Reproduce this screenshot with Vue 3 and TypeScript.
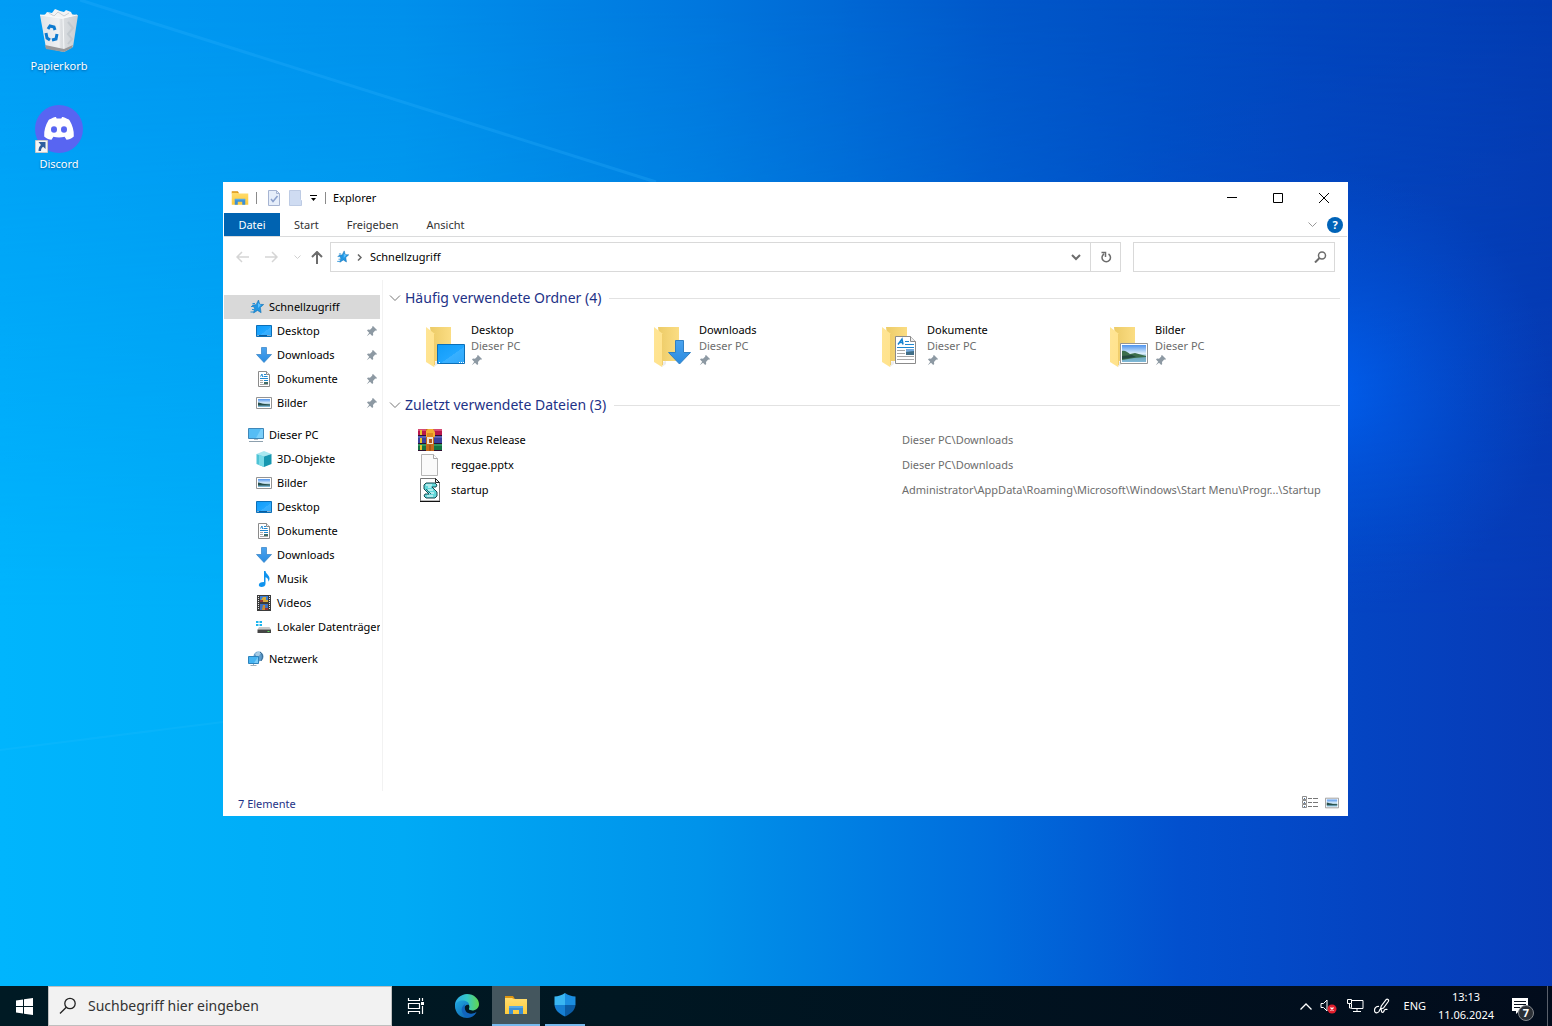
<script setup lang="ts">
import { ref } from 'vue'

interface NavItem { icon: string; label: string; level: number; pinned?: boolean; selected?: boolean }
interface Folder { icon: string; name: string }
interface RecentFile { icon: string; name: string; path: string }

const navGroups: NavItem[][] = [
  [
    { icon: 'star', label: 'Schnellzugriff', level: 0, selected: true },
    { icon: 'desktop', label: 'Desktop', level: 1, pinned: true },
    { icon: 'download', label: 'Downloads', level: 1, pinned: true },
    { icon: 'document', label: 'Dokumente', level: 1, pinned: true },
    { icon: 'picture', label: 'Bilder', level: 1, pinned: true },
  ],
  [
    { icon: 'pc', label: 'Dieser PC', level: 0 },
    { icon: 'cube', label: '3D-Objekte', level: 1 },
    { icon: 'picture', label: 'Bilder', level: 1 },
    { icon: 'desktop', label: 'Desktop', level: 1 },
    { icon: 'document', label: 'Dokumente', level: 1 },
    { icon: 'download', label: 'Downloads', level: 1 },
    { icon: 'music', label: 'Musik', level: 1 },
    { icon: 'video', label: 'Videos', level: 1 },
    { icon: 'drive', label: 'Lokaler Datenträger', level: 1 },
  ],
  [{ icon: 'network', label: 'Netzwerk', level: 0 }],
]

const folders: Folder[] = [
  { icon: 'folder-desktop', name: 'Desktop' },
  { icon: 'folder-download', name: 'Downloads' },
  { icon: 'folder-document', name: 'Dokumente' },
  { icon: 'folder-picture', name: 'Bilder' },
]

const files: RecentFile[] = [
  { icon: 'winrar', name: 'Nexus Release', path: 'Dieser PC\\Downloads' },
  { icon: 'blank-file', name: 'reggae.pptx', path: 'Dieser PC\\Downloads' },
  { icon: 'script-file', name: 'startup', path: 'Administrator\\AppData\\Roaming\\Microsoft\\Windows\\Start Menu\\Progr...\\Startup' },
]

const tabs = ['Start', 'Freigeben', 'Ansicht']
const windowSearch = ref('')
const taskbarSearch = ref('')
</script>

<template>
  <svg class="sprite" aria-hidden="true">
    <defs>
      <linearGradient id="g-blue" x1="0" y1="0" x2="1" y2="1">
        <stop offset="0" stop-color="#109cf8" /><stop offset=".55" stop-color="#20a6ff" /><stop offset=".56" stop-color="#38b0ff" /><stop offset="1" stop-color="#30a8fb" />
      </linearGradient>
      <linearGradient id="g-arrow" x1="0" y1="0" x2="0" y2="1">
        <stop offset="0" stop-color="#4aa3ef" /><stop offset="1" stop-color="#2a8be0" />
      </linearGradient>
      <linearGradient id="g-folder-back" x1="0" y1="0" x2="1" y2="0">
        <stop offset="0" stop-color="#eccb67" /><stop offset="1" stop-color="#fbdd83" />
      </linearGradient>
      <linearGradient id="g-folder-front" x1="0" y1="0" x2="1" y2="1">
        <stop offset="0" stop-color="#ffe596" /><stop offset="1" stop-color="#ffe28a" />
      </linearGradient>
      <linearGradient id="g-photo" x1="0" y1="0" x2="0" y2="1">
        <stop offset="0" stop-color="#4f94ee" /><stop offset=".5" stop-color="#dceefa" /><stop offset=".7" stop-color="#6fa8b8" /><stop offset="1" stop-color="#7fb8d8" />
      </linearGradient>
      <linearGradient id="g-yellow" x1="0" y1="0" x2="0" y2="1">
        <stop offset="0" stop-color="#ffdc6e" /><stop offset="1" stop-color="#ffcb3a" />
      </linearGradient>
      <linearGradient id="g-edge-blue" x1="0" y1="0" x2="1" y2="1">
        <stop offset="0" stop-color="#1fa8e0" /><stop offset="1" stop-color="#0b56a8" />
      </linearGradient>
      <linearGradient id="g-edge-green" x1="0" y1="0" x2="1" y2="0">
        <stop offset="0" stop-color="#2ba9e8" /><stop offset=".5" stop-color="#35c8c8" /><stop offset="1" stop-color="#62d64e" />
      </linearGradient>
      <linearGradient id="g-bin" x1="0" y1="0" x2="1" y2="0">
        <stop offset="0" stop-color="#dfe3e7" /><stop offset=".5" stop-color="#eff1f3" /><stop offset=".55" stop-color="#dcdfe2" /><stop offset="1" stop-color="#c9ced3" />
      </linearGradient>
    </defs>

    <symbol id="i-star" viewBox="0 0 16 16">
      <path d="M10.500 1l1.200 4.300 4 .2-3.400 3 .8 5.200-3.600-2.300-3.900 2.600 1-4.800-2.300-3.100 3.800-.4z" fill="#2196e3" stroke="#1371b4" stroke-width=".6" />
      <path d="M4.500 4.500H7M3 7.500h2M4 10.500h2M2.500 13h3.500" stroke="#2791d8" />
      <path d="M10 4v5l3-3z" fill="#5bc0ff" />
    </symbol>
    <symbol id="i-desktop" viewBox="0 0 16 16">
      <path d="M.5 2.500h15v11H.5z" fill="url(#g-blue)" stroke="#0b6fb8" />
      <path d="M1 12.500h14" stroke="#0b5c9c" /><path d="M1.500 12.500h1m9 0h1m1 0h1" stroke="#fff" />
    </symbol>
    <symbol id="i-download" viewBox="0 0 16 16">
      <path d="M5.500.5h5v7h5L8 15.500.5 7.500h5z" fill="url(#g-arrow)" stroke="#3080c4" stroke-width=".7" />
    </symbol>
    <symbol id="i-document" viewBox="0 0 16 16">
      <path d="M2.500.5h8l3 3v12h-11z" fill="#fff" stroke="#8b8b8b" /><path d="M10.500.5v3h3" fill="#eee" stroke="#8b8b8b" />
      <path d="M4.500 5.500L6 3l.5 3M8 3.500h2M7.500 5.500h4M4 7.500h8M8 9.500h4" stroke="#2088d0" fill="none" />
      <path d="M4 9.500h3M4 11.500h3M4 13.500h8" stroke="#a8a8a8" /><path d="M8 11h4v2H8z" fill="#416e66" />
    </symbol>
    <symbol id="i-picture" viewBox="0 0 16 16">
      <path d="M.5 2.500h15v11H.5z" fill="#fff" stroke="#949494" />
      <path d="M2 4h12v8H2z" fill="url(#g-photo)" /><path d="M2 7.500c2 0 4 1.500 7 1.500l5 .5v1H2z" fill="#294f4b" />
    </symbol>
    <symbol id="i-pc" viewBox="0 0 16 16">
      <path d="M.5 1.500h15v10H.5z" fill="#56bdf5" stroke="#3f87b8" /><path d="M8 11L13 2h2v9z" fill="#7bcffa" />
      <path d="M6 12h4v1H6z" fill="#b7c2ca" /><path d="M1 14.500h14" stroke="#8da0ae" />
    </symbol>
    <symbol id="i-cube" viewBox="0 0 16 16">
      <path d="M8 0l7.500 3L8 5.500.5 3z" fill="#a8e8f0" /><path d="M.5 3L8 5.500V16L.5 13z" fill="#4fc4d6" />
      <path d="M15.500 3L8 5.500V16l7.500-3z" fill="#1697b0" /><path d="M3 3.800l5 1.700V16l-5-2z" fill="#77d9e6" />
    </symbol>
    <symbol id="i-music" viewBox="0 0 16 16">
      <path d="M8 0h1.500c.3 3 4 4 4 7.500 0 1.500-.6 2.500-1.200 3.200.4-2.500-1-4-2.800-4.500v6.500C9.500 15 7.500 16 5.500 16 4 16 2.800 15.300 2.800 14c0-1.700 2-3 5.200-3z" fill="#0f93ee" />
    </symbol>
    <symbol id="i-video" viewBox="0 0 16 16">
      <path d="M1 0h14v16H1z" fill="#3b3b3b" /><path d="M4 1h8v6H4z" fill="#3d7fd0" /><path d="M4 9h8v6H4z" fill="#3d6fc0" />
      <path d="M7 2h3v3h2v2H5V5z" fill="#d7ab3a" /><path d="M7 10h2v3h3v2H6z" fill="#c88a30" /><path d="M4 5h3v2H4zM9 13h3v2H9z" fill="#913638" />
      <path d="M2.500 1v14M13.500 1v14" stroke="#e8e8e8" stroke-dasharray="1 1" />
    </symbol>
    <symbol id="i-drive" viewBox="0 0 16 16">
      <path d="M0 2h2.500v2H0zM3.500 2H6v2H3.500zM0 5h2.500v2H0zM3.500 5H6v2H3.500z" fill="#1bb5ee" />
      <path d="M3 8h10.500l1.500 2.500H1.500z" fill="#c8c8c8" /><path d="M1.500 10.500H15V14H1.500z" fill="#454545" /><path d="M11.500 12.500h2" stroke="#5be05b" />
    </symbol>
    <symbol id="i-network" viewBox="0 0 16 16">
      <circle cx="10.500" cy="5.500" r="5" fill="#5f9ccc" /><path d="M7 3c2-3 5-2 6-1-2 2-1 3-4 4z" fill="#a7cbe3" /><path d="M12 1c3 2 3 6 1 9" fill="none" stroke="#36668c" />
      <path d="M.5 5.500h10v7H.5z" fill="#46b4f2" stroke="#2d83bd" /><path d="M10 6v6H6z" fill="#7accf8" /><path d="M2.500 14.500h6M5.500 13v2" stroke="#9fb0bc" />
    </symbol>
    <symbol id="i-pin" viewBox="0 0 12 12">
      <path d="M7 1l4 4-.8.8-1-.2L7 8l.2 2-1 1L4 8.800.8 11.200l2.400-3.400L1 5.500l1-1 2 .2L6.300 2.500l-.2-.8z" fill="#8d99a3" />
    </symbol>
    <symbol id="i-explorer" viewBox="0 0 24 24">
      <path d="M1 3h8l2 3H1z" fill="#dc9410" /><path d="M1 5h7l2 1h13v15H1z" fill="url(#g-yellow)" />
      <path d="M5 14h14v7h-4v-4h-6v4H5z" fill="#3c8fd6" /><path d="M5 13h14v2H5z" fill="#57a9e5" />
    </symbol>

    <symbol id="folder-base" viewBox="0 0 42 44">
      <path d="M5 2h21v34H9z" fill="url(#g-folder-back)" /><path d="M9 37l4-1v3l-4 3z" fill="#ececec" />
      <path d="M1 2l9 7v28l-1 5-8-5z" fill="url(#g-folder-front)" /><path d="M9.500 9v31" stroke="#f1ce6c" />
    </symbol>
    <symbol id="i-folder-desktop" viewBox="0 0 42 44">
      <use href="#folder-base" width="42" height="44" />
      <path d="M12.500 19.500h27v19h-27z" fill="url(#g-blue)" stroke="#0b6fb8" /><path d="M14 37.500h1m19 0h1m1 0h1m1 0h1" stroke="#fff" />
    </symbol>
    <symbol id="i-folder-download" viewBox="0 0 42 44">
      <use href="#folder-base" width="42" height="44" />
      <path d="M22.500 15.500h8v12h7L26.500 39l-11-11.500h7z" fill="url(#g-arrow)" stroke="#3080c4" />
    </symbol>
    <symbol id="i-folder-document" viewBox="0 0 42 44">
      <use href="#folder-base" width="42" height="44" />
      <path d="M14.500 11.500h15l5 5v22h-20z" fill="#fff" stroke="#8b8b8b" /><path d="M29.500 11.500v5h5" fill="#eee" stroke="#8b8b8b" />
      <path d="M17 19.500l4-5.500 1 5.500M18.500 17.500h3" fill="none" stroke="#1582d0" stroke-width="1.500" />
      <path d="M24 16.500h4M24 19.500h9M16 22.500h17" stroke="#2088d0" />
      <path d="M16 25.500h8M16 28.500h8M16 31.500h17M16 34.500h17" stroke="#a8a8a8" /><path d="M25 24h8v6h-8z" fill="#416e86" /><path d="M25 24h8v2l-8 1z" fill="#75aadc" />
    </symbol>
    <symbol id="i-folder-picture" viewBox="0 0 42 44">
      <use href="#folder-base" width="42" height="44" />
      <path d="M11.500 18.500h27v20h-27z" fill="#fff" stroke="#949494" /><path d="M13 20h24v17H13z" fill="url(#g-photo)" />
      <path d="M13 26c3-1 5 1 8 3l5-1 11 3v1l-12 1-12 2z" fill="#3c6e4c" /><path d="M13 31l10-1 4 2-14 2z" fill="#234a40" />
    </symbol>
    <symbol id="i-winrar" viewBox="0 0 24 24">
      <path d="M0 1h24v7H0z" fill="#b8174b" /><path d="M0 1h24v2H0z" fill="#d64a74" /><path d="M0 8h24v8H0z" fill="#38409e" /><path d="M0 8h24v2H0z" fill="#5a61b8" />
      <path d="M0 16h24v7H0z" fill="#157343" /><path d="M0 16h24v2H0z" fill="#2f965f" /><path d="M0 7.500h24M0 15.500h24M0 22.500h24" stroke="#2c1030" />
      <path d="M2 2h2v5H2zM2 10h2v5H2zM2 17h2v5H2z" fill="#e5c42e" /><path d="M8 1h8v22H8z" fill="#c56a1c" />
      <path d="M8 3l2-2h5l2 3v5H8z" fill="#f3ae32" /><path d="M9 5h6v4H9z" fill="#e08a20" /><path d="M9 9h6v7H9z" fill="#eee3d0" /><path d="M11 11h3v4h-3z" fill="#b55518" /><path d="M12 17v6" stroke="#8b4410" />
    </symbol>
    <symbol id="i-blank-file" viewBox="0 0 24 24">
      <path d="M3.500 1.500h12l4 4v17h-16z" fill="#fafafa" stroke="#b5b5b5" /><path d="M15.500 1.500v4h4" fill="#fff" stroke="#a5a5a5" />
    </symbol>
    <symbol id="i-script-file" viewBox="0 0 24 24">
      <path d="M2.500.5h15l4 4v18.500h-19z" fill="#fff" stroke="#777" /><path d="M2 23.500h20" stroke="#111" /><path d="M17.500.5v4h4z" fill="#eee" stroke="#222" />
      <path d="M8 5h9l2 2-1 2h-4l5 5v4l-2 2H8l-2-2 1-2h4L6 11V7z" fill="#62d8da" stroke="#194b50" />
      <path d="M8 7h6M10 9h3M10 12h5M11 15h5M9 18h6" stroke="#fff" /><path d="M8 11l5 5" stroke="#206e72" />
    </symbol>
  </svg>

  <div class="screen">
    <svg class="wallpaper" viewBox="0 0 1552 1026" preserveAspectRatio="none" aria-hidden="true">
      <defs>
        <linearGradient id="w-top" x1="0" y1="0" x2="1" y2="0">
          <stop offset="0" stop-color="#009df5" /><stop offset=".26" stop-color="#0090ec" /><stop offset=".45" stop-color="#0077de" />
          <stop offset=".64" stop-color="#0058ca" /><stop offset=".84" stop-color="#0246be" /><stop offset="1" stop-color="#033cb2" />
        </linearGradient>
        <linearGradient id="w-bottom" x1="0" y1="0" x2="1" y2="0">
          <stop offset="0" stop-color="#00b5fd" /><stop offset=".26" stop-color="#00aaf5" /><stop offset=".45" stop-color="#0093ea" />
          <stop offset=".64" stop-color="#006cdc" /><stop offset=".76" stop-color="#0250ce" /><stop offset=".88" stop-color="#0444c2" /><stop offset="1" stop-color="#073ab6" />
        </linearGradient>
        <linearGradient id="w-fade" x1="0" y1="0" x2="0" y2="1">
          <stop offset="0" stop-color="#000" /><stop offset=".6" stop-color="#fff" />
        </linearGradient>
        <mask id="w-mask"><rect width="1552" height="1026" fill="url(#w-fade)" /></mask>
        <radialGradient id="w-glow" gradientUnits="userSpaceOnUse" cx="1330" cy="390" r="220">
          <stop offset="0" stop-color="#0068ff" stop-opacity=".7" /><stop offset="1" stop-color="#0058e0" stop-opacity="0" />
        </radialGradient>
      </defs>
      <rect width="1552" height="1026" fill="url(#w-top)" />
      <rect width="1552" height="1026" fill="url(#w-bottom)" mask="url(#w-mask)" />
      <rect width="1552" height="1026" fill="url(#w-glow)" />
      <path d="M80 0L656 182" stroke="#30b4ff" stroke-width="3" opacity=".25" />
      <path d="M0 750L223 722" stroke="#40c8ff" stroke-width="2" opacity=".12" />
    </svg>

    <main class="desktop">
      <div class="shortcuts">
        <button class="shortcut">
          <svg width="48" height="48" viewBox="0 0 48 48" aria-hidden="true">
            <path d="M5 8l21-2 17 2-5 32-9 5-18-4z" fill="url(#g-bin)" />
            <path d="M9 9l3-4 5 1 3-4 5 2 4 1 2-2 5 2 2 4-11 3z" fill="#f3f4f5" /><path d="M14 6l5 3 4-4 6 4 5-3" fill="none" stroke="#cbd0d4" />
            <path d="M5 8l22 3 15-3M28 11l1 33" fill="none" stroke="#f8fafb" /><path d="M10 38l19 4 9-4-1 3-8 4-18-3z" fill="#98989a" />
            <path d="M33 15l5 6-5 6 4 5-4 5" fill="none" stroke="#c3c9ce" stroke-width="2" />
            <path d="M13 22l2-3 4 1 1 3M22 27l-1 5-4 1M11 26l1 5 3 2" fill="none" stroke="#0d7ad0" stroke-width="3" />
          </svg>
          <span>Papierkorb</span>
        </button>
        <button class="shortcut">
          <svg width="48" height="48" viewBox="0 0 48 48" aria-hidden="true">
            <circle cx="24" cy="24" r="24" fill="#5865f2" />
            <path d="M16.500 13.500c2-.9 4-1.400 4.400-1.400l.8 1.500h4.600l.8-1.500c.4 0 2.400.5 4.400 1.400 1.500.6 2.500 1 3 1.800 3 5 4.600 10.200 4.300 16.200-2.500 2.100-5.300 3.200-7.300 3.300l-1.900-3.100c-3.600 1.100-7.600 1.100-11.200 0l-1.900 3.100c-2-.1-4.800-1.200-7.300-3.300-.3-6 1.300-11.200 4.300-16.200.5-.8 1.500-1.200 3-1.800z" fill="#fff" />
            <ellipse cx="19" cy="24.500" rx="3" ry="3.300" fill="#5865f2" /><ellipse cx="29" cy="24.500" rx="3" ry="3.300" fill="#5865f2" />
            <path d="M.5 35.500h12v12H.5z" fill="#f5f5f5" stroke="#c9c9c9" /><path d="M3.500 37h7v7l-2.300-2.300c-1.500 1-2.200 2.300-2.200 4.300H3.500c0-3 1-4.700 2.500-6z" fill="#2f5e9e" />
          </svg>
          <span>Discord</span>
        </button>
      </div>

      <section class="window" aria-label="Explorer">
        <header class="titlebar">
          <div class="quick">
            <svg width="18" height="18" aria-hidden="true"><use href="#i-explorer" /></svg>
            <i class="sep"></i>
            <button class="quick-btn first" aria-label="Eigenschaften">
              <svg width="14" height="16" viewBox="0 0 14 16"><path d="M1.500.5h8l3 3v12h-11z" fill="#e6eefa" stroke="#a6b4d2" /><path d="M9.500.5v3h3" fill="none" stroke="#a6b4d2" /><path d="M4 9l2 2.500L10.500 6" fill="none" stroke="#8ba0cc" stroke-width="1.500" /></svg>
            </button>
            <button class="quick-btn" aria-label="Neuer Ordner">
              <svg width="14" height="16" viewBox="0 0 14 16"><path d="M1.500.5h11v9l1 1v5h-12z" fill="#cfdcf2" stroke="#bdcbe4" /></svg>
            </button>
            <button class="quick-btn" aria-label="Symbolleiste anpassen">
              <svg width="9" height="8" viewBox="0 0 9 8"><path d="M1 1.500h7" stroke="#000" /><path d="M2 4h5L4.500 7z" /></svg>
            </button>
            <i class="sep"></i>
            <h1>Explorer</h1>
          </div>
          <div class="controls">
            <button aria-label="Minimieren"><svg width="10" height="10"><path d="M0 4.500h10" stroke="#000" /></svg></button>
            <button aria-label="Maximieren"><svg width="10" height="10"><path d="M.5.5h9v9h-9z" fill="none" stroke="#000" /></svg></button>
            <button aria-label="Schließen"><svg width="10" height="10"><path d="M0 0l10 10M10 0L0 10" stroke="#000" /></svg></button>
          </div>
        </header>

        <nav class="ribbon" aria-label="Menüband">
          <button class="file-tab">Datei</button>
          <button v-for="t in tabs" :key="t">{{ t }}</button>
          <div class="ribbon-end">
            <button aria-label="Menüband erweitern"><svg width="9" height="6"><path d="M.5.5l4 4 4-4" fill="none" stroke="#999" /></svg></button>
            <button class="help" aria-label="Hilfe">?</button>
          </div>
        </nav>

        <div class="addressbar">
          <div class="arrows">
            <button aria-label="Zurück"><svg width="13" height="12"><path d="M6 1L1 6l5 5M1 6h12" fill="none" stroke="#d5d5d5" stroke-width="1.500" /></svg></button>
            <button aria-label="Vorwärts"><svg width="13" height="12"><path d="M7 1l5 5-5 5M12 6H0" fill="none" stroke="#d5d5d5" stroke-width="1.500" /></svg></button>
            <button aria-label="Verlauf"><svg width="7" height="5"><path d="M.5.5l3 3 3-3" fill="none" stroke="#cfcfcf" /></svg></button>
            <button aria-label="Nach oben"><svg width="12" height="13"><path d="M1 6l5-5 5 5M6 1v12" fill="none" stroke="#6c6c6c" stroke-width="2" /></svg></button>
          </div>
          <div class="path">
            <svg width="14" height="14" aria-hidden="true"><use href="#i-star" /></svg>
            <svg width="5" height="7" aria-hidden="true"><path d="M1 .5l3 3-3 3" fill="none" stroke="#666" stroke-width="1.500" /></svg>
            <a href="#">Schnellzugriff</a>
            <button class="drop" aria-label="Vorherige Orte"><svg width="10" height="7"><path d="M1 1l4 4 4-4" fill="none" stroke="#6c6c6c" stroke-width="2" /></svg></button>
            <button class="reload" aria-label="Aktualisieren"><svg width="12" height="12" viewBox="0 0 12 12"><path d="M8.500 3A4.200 4.200 0 1 1 4 3M1.500 1.500h4V6" fill="none" stroke="#6c6c6c" stroke-width="1.500" /></svg></button>
          </div>
          <div class="search">
            <input v-model="windowSearch" type="text" aria-label="Schnellzugriff durchsuchen" />
            <svg width="13" height="12" viewBox="0 0 13 12" aria-hidden="true"><circle cx="8" cy="4.500" r="3.500" fill="none" stroke="#6c6c6c" stroke-width="1.500" /><path d="M5.500 7L1 11.500" stroke="#6c6c6c" stroke-width="2" /></svg>
          </div>
        </div>

        <div class="body">
          <nav class="tree" aria-label="Navigationsbereich">
            <ul v-for="(group, g) in navGroups" :key="g">
              <li v-for="item in group" :key="item.label">
                <a href="#" :class="{ child: item.level === 1, selected: item.selected }">
                  <svg width="16" height="16" aria-hidden="true"><use :href="'#i-' + item.icon" /></svg>
                  <span>{{ item.label }}</span>
                  <svg v-if="item.pinned" class="pin" width="12" height="12" aria-hidden="true"><use href="#i-pin" /></svg>
                </a>
              </li>
            </ul>
          </nav>

          <div class="content">
            <h2><svg width="12" height="7" aria-hidden="true"><path d="M1 .5l5 5 5-5" fill="none" stroke="#777" /></svg>Häufig verwendete Ordner (4)</h2>
            <ul class="folders">
              <li v-for="f in folders" :key="f.name">
                <svg width="42" height="44" aria-hidden="true"><use :href="'#i-' + f.icon" /></svg>
                <div class="folder-text">
                  <span>{{ f.name }}</span>
                  <span class="muted">Dieser PC</span>
                  <svg width="12" height="12" aria-hidden="true"><use href="#i-pin" /></svg>
                </div>
              </li>
            </ul>
            <h2><svg width="12" height="7" aria-hidden="true"><path d="M1 .5l5 5 5-5" fill="none" stroke="#777" /></svg>Zuletzt verwendete Dateien (3)</h2>
            <table class="files">
              <tbody>
                <tr v-for="f in files" :key="f.name">
                  <td class="file-icon"><svg width="24" height="24" aria-hidden="true"><use :href="'#i-' + f.icon" /></svg></td>
                  <td class="file-name">{{ f.name }}</td>
                  <td class="muted">{{ f.path }}</td>
                </tr>
              </tbody>
            </table>
          </div>
        </div>

        <footer class="status">
          <span>7 Elemente</span>
          <div class="views">
            <button aria-label="Details"><svg width="16" height="13" viewBox="0 0 16 13"><path d="M.5.500h4v3h-4zM.5 4.500h4v3h-4zM.5 8.500h4v3h-4z" fill="#fff" stroke="#8c8c8c" /><path d="M2 2.500h1M2 6.500h1M2 10.500h1" stroke="#4470a0" /><path d="M6 2.500h4m1 0h5M6 6.500h4m1 0h5M6 10.500h4m1 0h5" stroke="#777" /></svg></button>
            <button aria-label="Große Symbole"><svg width="14" height="14"><use href="#i-picture" /></svg></button>
          </div>
        </footer>
      </section>
    </main>

    <footer class="taskbar">
      <button class="start" aria-label="Start"><svg width="17" height="17" viewBox="0 0 17 17"><path d="M0 2.500L7 1.500v6.500H0zM8 1.300L17 0v8H8zM0 9h7v6.500l-7-1zM8 9h9v8l-9-1.300z" fill="#fff" /></svg></button>
      <label class="task-search">
        <svg width="18" height="18" viewBox="0 0 18 18" aria-hidden="true"><circle cx="11" cy="6.500" r="5.200" fill="none" stroke="#222" stroke-width="1.300" /><path d="M7.300 10.200L1 16.500" stroke="#222" stroke-width="1.300" /></svg>
        <input v-model="taskbarSearch" type="text" placeholder="Suchbegriff hier eingeben" aria-label="Suche" />
      </label>
      <button aria-label="Taskansicht"><svg width="18" height="16" viewBox="0 0 18 16"><path d="M1.500 0v2.500h11V0M1.500 16v-2.500h11V16M1.500 5.500h11v5h-11zM15.500 0v3M15.500 8v8" fill="none" stroke="#fff" stroke-width="1.200" /><path d="M14 4h3v3h-3z" fill="#fff" /></svg></button>
      <button class="edge" aria-label="Microsoft Edge">
        <svg width="24" height="24" viewBox="0 0 24 24">
          <path d="M0 11C0 5 6 0 12 0c7 0 12 5 12 10 0 4-3 6.500-7 6.500-2.500 0-3.500-1-3-2 1-1.500.5-6-4.500-6C5 8.500 1 10 0 15z" fill="url(#g-edge-green)" />
          <path d="M0 12c0-3 3.500-5.500 7.500-5.500 3.500 0 6.500 1.500 6.500 4.500-2-1-5 1-5 4.500 0 4 4 6.500 8 5 1.500-.5 3.500-1.500 4.500-2.500C19.500 22 16 24 12 24 5 24 0 18.500 0 12z" fill="url(#g-edge-blue)" />
          <path d="M10 10c-3 2-4 5-3 8 1 3 4 5 6 5.500 3-.2 6.500-2 8.500-5.500-4 2.500-8.500 2-10.500-.5-1.500-2-1.500-5-1-7.500z" fill="#1165bd" />
          <path d="M13.800 11c.5 1.500-.5 2.500-.3 3.500.2 1 1.500 2 3.500 2-2 1.500-5.500 1-6-1.500-.3-1.700 1-3.700 2.800-4z" fill="#021923" />
        </svg>
      </button>
      <button class="active" aria-label="Explorer"><svg width="24" height="24"><use href="#i-explorer" /></svg></button>
      <button class="running" aria-label="Windows-Sicherheit">
        <svg width="24" height="24" viewBox="0 0 24 24"><path d="M12 0C9 2 5 3.500 1.500 3.500V12H12z" fill="#39b6f2" /><path d="M12 0c3 2 7 3.500 10.500 3.500V12H12z" fill="#1b8ee0" /><path d="M1.500 12H12v11.500C6 21 2 17 1.500 12z" fill="#167fd2" /><path d="M22.500 12H12v11.500c6-2.500 10-6.500 10.500-11.500z" fill="#0b5ca5" /></svg>
      </button>

      <div class="tray">
        <button class="overflow" aria-label="Ausgeblendete Symbole"><svg width="12" height="7"><path d="M.5 6.500L6 1l5.500 5.500" fill="none" stroke="#fff" stroke-width="1.300" /></svg></button>
        <button aria-label="Lautsprecher"><svg width="17" height="16" viewBox="0 0 17 16"><path d="M1 5.500h2.500L7 2v11L3.500 9.500H1z" fill="none" stroke="#fff" /><circle cx="12" cy="11" r="4.500" fill="#e01f2d" /><path d="M10.500 9.500l3 3m0-3l-3 3" stroke="#fff" stroke-width="1.200" /></svg></button>
        <button aria-label="Netzwerk"><svg width="17" height="14" viewBox="0 0 17 14"><path d="M5 1.500h11v8H4.500V5M6 12.500h8M10 10v3" fill="none" stroke="#fff" /><path d="M.5.5h4v4h-4zM2.500 4.500V9h2" fill="#02101c" stroke="#fff" /></svg></button>
        <button aria-label="Windows Ink"><svg width="16" height="17" viewBox="0 0 16 17"><path d="M6.500 11l.8-3 5-6.500c1-1 3 .3 2 2L9.500 10z" fill="none" stroke="#fff" stroke-width="1.200" /><path d="M5 8.500C1.500 8 0 11 .7 13.500c.6 2 3.300 1.500 4.300 0l1-2c.5-1 1.500 0 1.500 1.500 0 2 2 1.500 2.500 0 .3-1.500 1.500-2 3.500-1.500" fill="none" stroke="#fff" stroke-width="1.200" /></svg></button>
        <button class="lang">ENG</button>
        <button class="clock"><span>13:13</span><span>11.06.2024</span></button>
        <button class="notify" aria-label="7 neue Benachrichtigungen">
          <svg width="16" height="16" viewBox="0 0 16 16"><path d="M0 0h16v13H7l-3 3v-3H0z" fill="#fff" /><path d="M2 3.500h12M2 6.500h12M2 9.500h6" stroke="#07101c" /></svg>
          <b>7</b>
        </button>
        <button class="show-desktop" aria-label="Desktop anzeigen"></button>
      </div>
    </footer>
  </div>
</template>

<style>
body { margin: 0; }
</style>

<style scoped>
.sprite { position: absolute; width: 0; height: 0; }
.screen {
  position: relative; display: flex; flex-direction: column; min-height: 100vh; overflow: hidden;
  background: #0090ec; color: #000; font: 11px/16px "Noto Sans", "Open Sans", sans-serif;
}
.wallpaper { position: absolute; inset: 0; width: 100%; height: 100%; }
button { display: flex; align-items: center; justify-content: center; padding: 0; border: 0; background: none; color: inherit; font: inherit; }
input { min-width: 0; padding: 0; border: 0; outline: 0; background: none; font: inherit; }
a { color: inherit; text-decoration: none; }
ul { margin: 0; padding: 0; list-style: none; }
h1, h2 { margin: 0; font: inherit; }
svg { flex: none; display: block; }

.desktop { position: relative; flex: 1; }
.shortcuts { display: flex; flex-direction: column; gap: 31px; width: 118px; padding-top: 7px; }
.shortcut { flex-direction: column; gap: 3px; color: #fff; text-shadow: 0 1px 2px rgba(0, 40, 90, .5); }

.window { position: absolute; inset: 182px 204px 170px 223px; display: flex; flex-direction: column; padding: 0 1px; background: #fff; }
.titlebar { display: flex; justify-content: space-between; height: 31px; }
.quick { display: flex; align-items: center; gap: 7px; padding-left: 7px; }
.sep { width: 1px; height: 12px; background: #8a8a8a; }
.quick-btn.first { margin-left: 3px; }
.controls { display: flex; }
.controls button { width: 46px; }

.ribbon { display: flex; height: 23px; border-bottom: 1px solid #dadbdc; color: #333; }
.ribbon > button { padding: 0 14px; }
.ribbon .file-tab { min-width: 56px; background: #0063b1; color: #fff; }
.ribbon-end { display: flex; align-items: center; gap: 10px; margin-left: auto; padding-right: 4px; }
.help { width: 16px; height: 16px; border-radius: 50%; background: #0063b8; color: #fff; font-weight: 700; }

.addressbar { display: flex; height: 30px; padding: 5px 12px 8px 12px; }
.arrows { display: flex; align-items: center; gap: 16px; width: 94px; }
.arrows button:last-child { margin-left: -6px; }
.path { display: flex; flex: 1; align-items: center; gap: 8px; box-sizing: border-box; padding-left: 4px; border: 1px solid #d9d9d9; }
.drop { width: 28px; height: 28px; margin-left: auto; margin-right: -8px; }
.reload { width: 30px; height: 28px; border-left: 1px solid #d9d9d9; box-sizing: border-box; }
.search { display: flex; align-items: center; box-sizing: border-box; width: 202px; margin-left: 12px; padding: 0 7px; border: 1px solid #d9d9d9; }
.search input { flex: 1; }

.body { display: flex; flex: 1; min-height: 0; }
.tree { display: flex; flex-direction: column; gap: 8px; box-sizing: border-box; width: 159px; padding: 15px 2px 0 0; border-right: 1px solid #f2f2f2; }
.tree a { display: flex; align-items: center; gap: 5px; height: 24px; padding-left: 24px; white-space: nowrap; overflow: hidden; }
.tree a.child { padding-left: 32px; }
.tree a.selected { background: #d9d9d9; }
.pin { margin-left: auto; margin-right: 2px; }

.content { flex: 1; min-width: 0; padding: 8px 7px 0 6px; }
h2 { display: flex; align-items: center; gap: 4px; height: 20px; color: #1e3287; font-size: 14px; line-height: 20px; white-space: nowrap; }
h2::after { content: ""; flex: 1; height: 1px; margin-left: 4px; background: #e2e2e2; }
.folders { display: flex; padding: 14px 0 19px 36px; }
.folders li { display: flex; gap: 4px; width: 228px; height: 54px; }
.folders li > svg { margin-top: 3px; }
.folder-text { display: flex; flex-direction: column; }
.muted { color: #6d6d6d; }
.files { width: 100%; margin-top: 12px; border-collapse: collapse; table-layout: fixed; }
.files td { height: 25px; padding: 0; white-space: nowrap; }
.files .file-icon { width: 62px; }
.file-icon svg { margin-left: 29px; }
.files .file-name { width: 451px; }

.status { display: flex; align-items: center; justify-content: space-between; height: 25px; padding: 0 8px 0 14px; color: #1e3287; }
.views { display: flex; align-items: center; gap: 7px; padding-bottom: 2px; }

.taskbar { position: relative; display: flex; height: 40px; background: linear-gradient(90deg, #001a24, #001722 40%, #020c1c); color: #fff; }
.taskbar > button { width: 48px; }
.task-search { display: flex; align-items: center; gap: 11px; box-sizing: border-box; width: 344px; padding: 0 10px; border: 1px solid #bfbfbf; background: #f2f2f2; }
.task-search input { flex: 1; height: 24px; font-size: 14px; line-height: 24px; }
.task-search input::placeholder { color: #333; opacity: 1; }
.taskbar .edge { margin-left: 3px; }
.taskbar .active { margin-left: 1px; background: #44565e; border-bottom: 2px solid #76b9ed; }
.taskbar .running { width: 40px; margin-left: 5px; border-bottom: 2px solid #76b9ed; }
.tray { display: flex; align-items: stretch; gap: 10px; margin-left: auto; }
.overflow { margin-right: -2px; }
.lang { margin-left: 4px; }
.clock { flex-direction: column; width: 60px; line-height: 18px; }
.notify { position: relative; width: 28px; margin-right: 3px; }
.notify b { position: absolute; left: 12px; top: 19px; box-sizing: border-box; width: 16px; height: 16px; border: 1px solid #84888e; border-radius: 50%; background: #2c3036; font-size: 11px; line-height: 14px; }
.show-desktop { box-sizing: border-box; width: 5px; border-left: 1px solid #5a606b; }
</style>
